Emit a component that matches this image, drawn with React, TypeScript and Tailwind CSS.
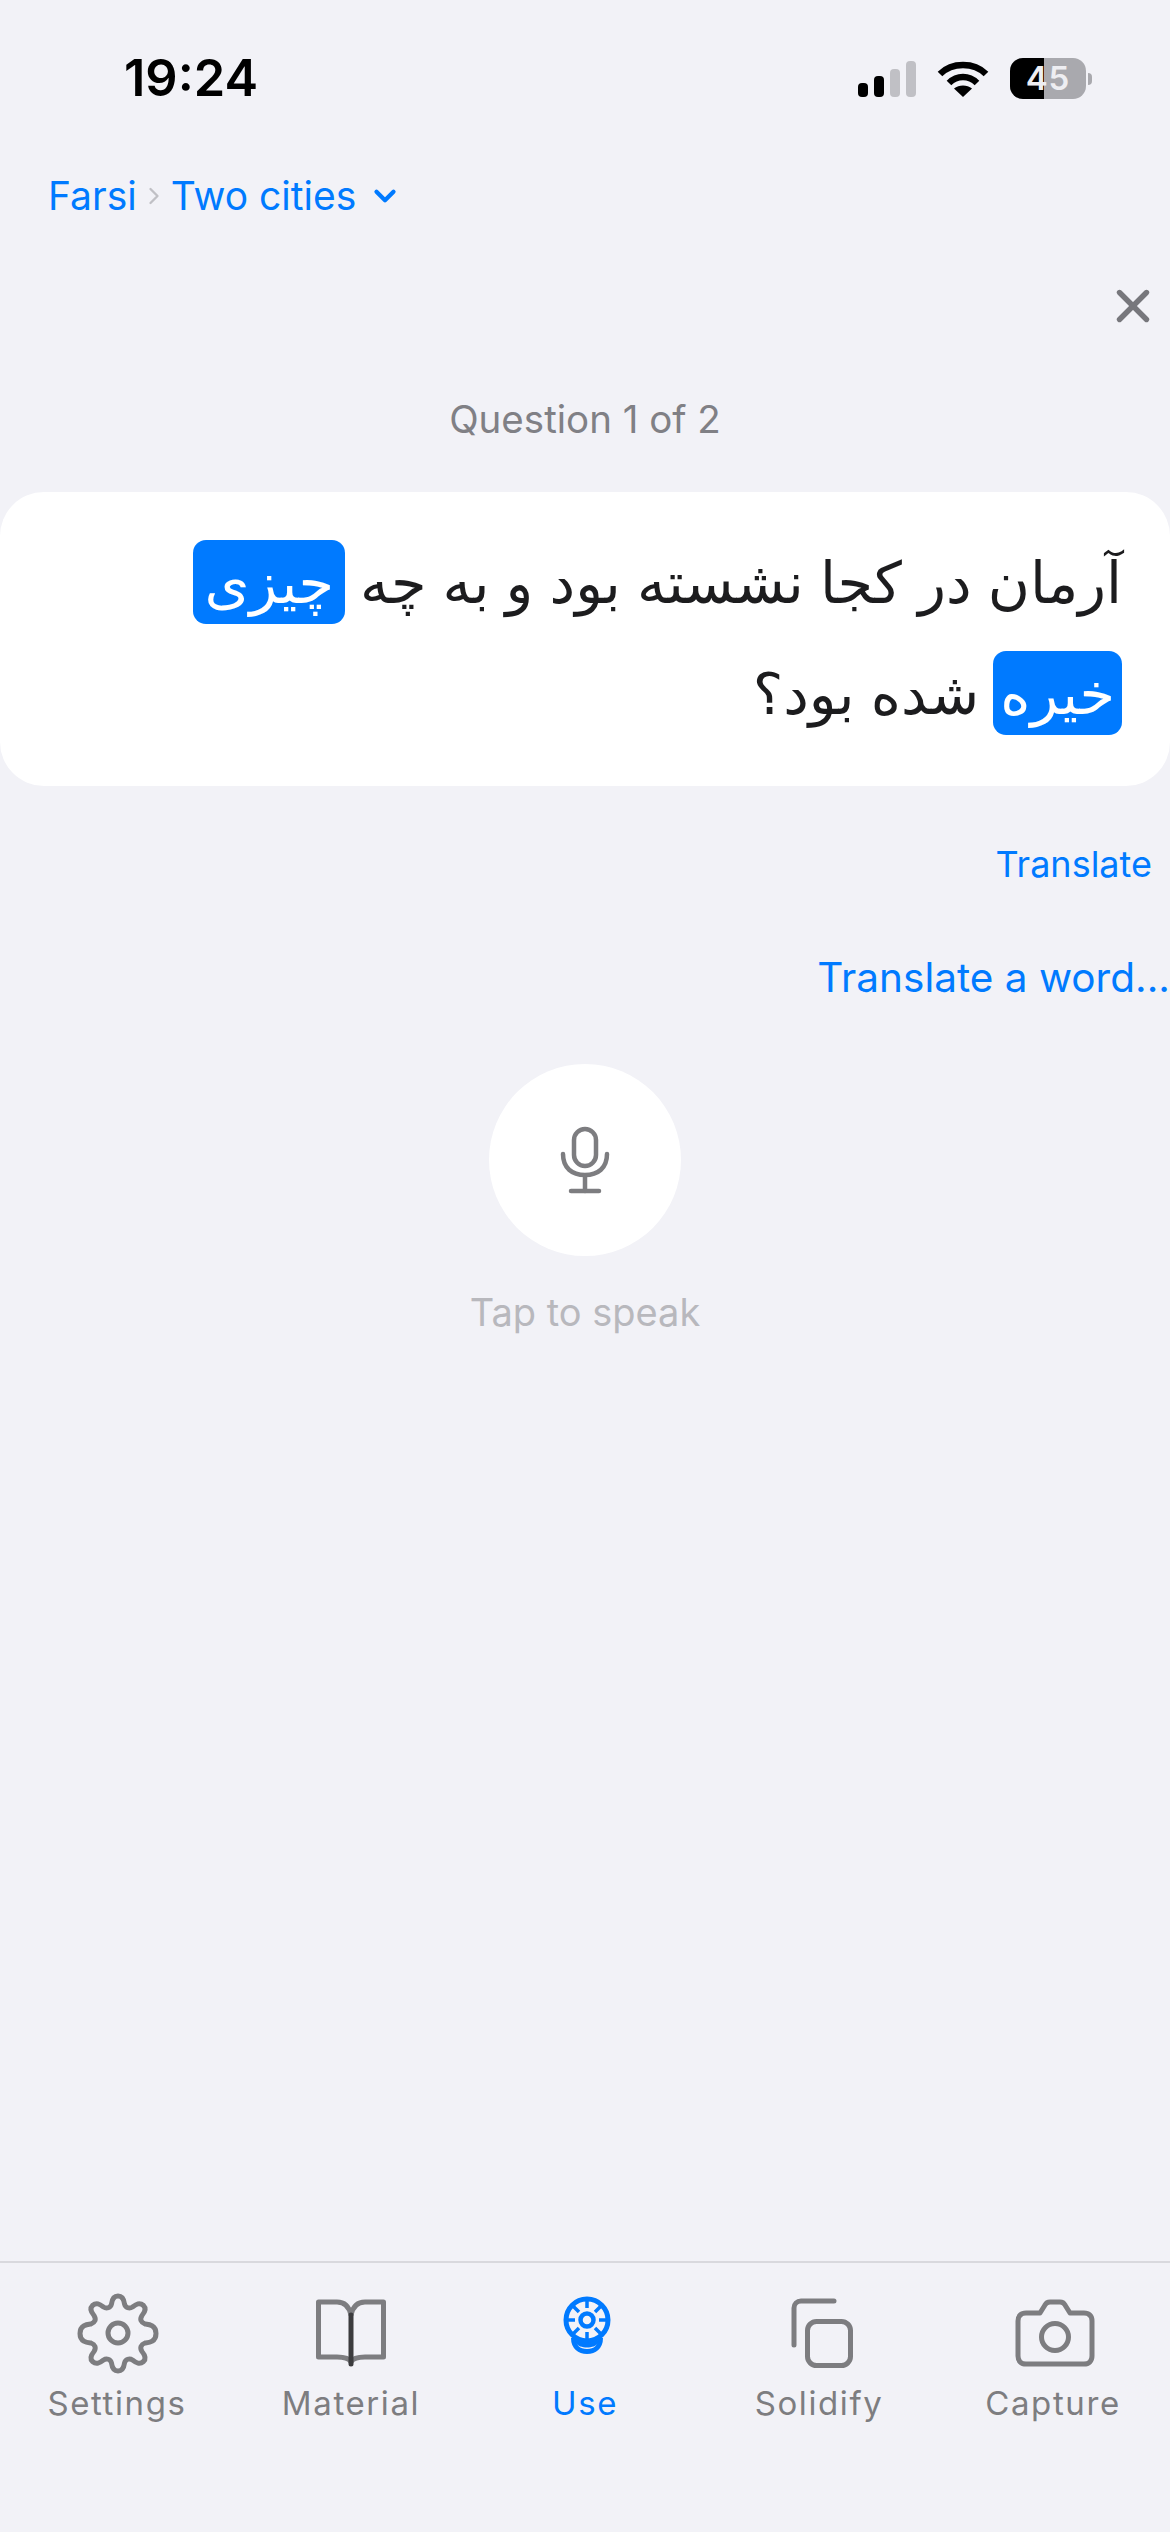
import { X, ChevronDown, ChevronRight } from "lucide-react";

const BLUE = "text-[#007aff]";

function SignalIcon() {
  return (
    <svg width="60" height="38" viewBox="0 0 60 38">
      <rect x="2" y="23" width="10" height="14" rx="4" fill="#000" />
      <rect x="18" y="16" width="10" height="21" rx="4" fill="#000" />
      <rect x="34" y="9" width="10" height="28" rx="4" fill="#c0c0c5" />
      <rect x="50" y="1" width="10" height="36" rx="4" fill="#c0c0c5" />
    </svg>
  );
}

function WifiIcon() {
  return (
    <svg width="52" height="38" viewBox="0 0 52 38" fill="none" stroke="#000" strokeWidth="6.5">
      <path d="M3 14C15 2 37 2 49 14" />
      <path d="M12 23C20 15 32 15 40 23" />
      <path d="M26 37L17 28.5C22 24.5 30 24.5 35 28.5Z" fill="#000" stroke="none" />
    </svg>
  );
}

function BatteryIcon() {
  return (
    <div className="flex items-center">
      <div className="relative flex h-[41px] w-[76px] items-center justify-center overflow-hidden rounded-[13px] bg-[#a9a9ae]">
        <div className="absolute inset-y-0 left-0 w-[34px] bg-black" />
        <span className="relative text-[33px] font-semibold leading-none tracking-[1px] text-[#eeeef2]">45</span>
      </div>
      <div className="ml-[2px] h-[12px] w-[4px] rounded-r-full bg-[#a9a9ae]" />
    </div>
  );
}

function MicIcon() {
  return (
    <svg width="50" height="68" viewBox="0 0 50 68" fill="none" stroke="#7d7d80" strokeWidth="4.500" strokeLinecap="round">
      <rect x="14" y="3" width="22" height="37" rx="11" />
      <path d="M3 28c0 14 9 21 22 21s22-7 22-21" />
      <path d="M25 51v14" />
      <path d="M11 65h28" />
    </svg>
  );
}

function GearIcon() {
  return (
    <svg width="82" height="82" viewBox="0 0 82 82" fill="none" stroke="#7d7d80" strokeWidth="5" className="ml-[2px]">
      <path d="M41 4c5 0 6 4 6.500 8 1 4 5 5 8 3 4-3 7-5 11-1.500 3 3 1 7-1.500 10-2.500 4-1 7 3 8.500 4 .5 11 1 11 9.500s-7 9-11 9.500c-4 1.500-5.500 4.500-3 8.500 2.500 3 4.500 7 1.500 10-4 3.500-7 1.500-11-1.500-3-2-7-1-8 3-.5 4-1.500 8-6.500 8s-6-4-6.500-8c-1-4-5-5-8-3-4 3-7 5-11 1.500-3-3-1-7 1.500-10 2.500-4 1-7-3-8.500-4-.5-11-1-11-9.500s7-9 11-9.500c4-1.500 5.500-4.500 3-8.500-2.500-3-4.500-7-1.500-10 4-3.500 7-1.500 11 1.500 3 2 7 1 8-3 .5-4 1.500-8 6.500-8z" />
      <circle cx="41" cy="41" r="10" />
    </svg>
  );
}

function BookIcon() {
  return (
    <svg width="72" height="70" viewBox="0 0 72 70" fill="none" strokeWidth="5">
      <path d="M36 17C34 8 29 4 22 4H3.500v55H22c7 0 12 1 14 5 2-4 7-5 14-5h18.500V4H50c-7 0-12 4-14 13z" stroke="#7d7d80" strokeLinejoin="round" />
      <path d="M36 17V66" stroke="#3c3c3e" strokeLinecap="round" />
    </svg>
  );
}

function BulbIcon() {
  return (
    <svg width="48" height="58" viewBox="0 0 48 58" fill="none" stroke="#007aff" strokeWidth="5" className="ml-[4px] -mt-[16px]">
      <circle cx="24" cy="24" r="21" />
      <circle cx="24" cy="24" r="6.500" strokeWidth="4.500" />
      <path d="M24 4v8M24 36v8M4 24h8M36 24h8M10 10l6 6M32 32l6 6M38 10l-6 6M16 32l-6 6" strokeWidth="3.500" />
      <path d="M10.500 42c0 9 6 13.500 13.500 13.500S37.500 51 37.500 42" />
      <path d="M13 44c7 3 15 3 22 0v3c-3 6-19 6-22 0z" fill="#007aff" stroke="none" />
    </svg>
  );
}

function CardsIcon() {
  return (
    <svg width="62" height="70" viewBox="0 0 62 70" fill="none" stroke="#7d7d80" strokeWidth="5" strokeLinecap="round" className="ml-[6px]">
      <path d="M43 3H10C6 3 3 6 3 10V47" />
      <rect x="16.500" y="23.500" width="43" height="44" rx="9" />
    </svg>
  );
}

function CameraIcon() {
  return (
    <svg width="80" height="68" viewBox="0 0 80 68" fill="none" stroke="#7d7d80" strokeWidth="5" className="ml-[3px]">
      <path d="M11 14h14l5-8c1-2 3-3 5-3h10c2 0 4 1 5 3l5 8h14c5 0 8 3 8 8v35c0 5-3 8-8 8H11c-5 0-8-3-8-8V22c0-5 3-8 8-8z" strokeLinejoin="round" />
      <circle cx="40" cy="38" r="13.500" />
    </svg>
  );
}

const tabs = [
  { label: "Settings", icon: <GearIcon />, active: false },
  { label: "Material", icon: <BookIcon />, active: false },
  { label: "Use", icon: <BulbIcon />, active: true },
  { label: "Solidify", icon: <CardsIcon />, active: false },
  { label: "Capture", icon: <CameraIcon />, active: false },
];

export default function App() {
  return (
    <div className="flex h-[2532px] w-[1170px] flex-col overflow-hidden bg-[#f2f2f7] font-['Inter','DejaVu_Sans',sans-serif]">
      {/* status bar */}
      <div className="flex h-[157px] shrink-0 items-start justify-between pt-[50px] pl-[124px] pr-[78px]">
        <span className="text-[50.500px] font-semibold leading-[56px] text-black">19:24</span>
        <div className="flex items-center gap-[21px] pt-[8px]">
          <SignalIcon />
          <WifiIcon />
          <BatteryIcon />
        </div>
      </div>

      {/* breadcrumb */}
      <div className={`flex h-[78px] shrink-0 items-center pl-[48px] text-[39px] ${BLUE}`}>
        <span>Farsi</span>
        <ChevronRight size={28} strokeWidth={2} className="mx-[3px] text-[#c0c0c5]" />
        <span>Two cities</span>
        <ChevronDown size={34} strokeWidth={3} className="ml-[12px]" />
      </div>

      <div className="mt-[36px] flex h-[70px] shrink-0 items-center justify-end pr-[10px]">
        <X size={54} strokeWidth={2.4} className="text-[#77777c]" />
      </div>

      <div className="mt-[55px] shrink-0 text-center text-[38.500px] leading-[46px] text-[#808085]">Question 1 of 2</div>

      {/* question card */}
      <div
        dir="rtl"
        className="mt-[50px] h-[294px] shrink-0 rounded-[44px] bg-white pt-[48px] pr-[48px] pl-[20px] text-[57.500px] text-[#1c1c1e]"
      >
        <div className="flex h-[84px] items-center">
          <span>آرمان در کجا نشسته بود و به چه</span>
          <span className="mr-[15px] flex h-[84px] items-center rounded-[13px] bg-[#007aff] px-[11px] text-white">چیزی</span>
        </div>
        <div className="mt-[27px] flex h-[84px] items-center">
          <span className="flex h-[84px] items-center rounded-[13px] bg-[#007aff] px-[7px] text-white">خیره</span>
          <span className="mr-[14px]">شده بود؟</span>
        </div>
      </div>

      <div className={`mt-[54px] shrink-0 pr-[18px] text-right text-[36px] leading-[48px] ${BLUE}`}>Translate</div>
      <div className={`mt-[66px] shrink-0 text-right text-[40.500px] leading-[48px] ${BLUE}`}>Translate a word...</div>

      {/* mic */}
      <div className="mt-[62px] flex shrink-0 flex-col items-center">
        <div className="flex h-[192px] w-[192px] items-center justify-center rounded-full bg-white">
          <MicIcon />
        </div>
        <div className="mt-[32px] text-[38px] leading-[48px] text-[#b8b8bd]">Tap to speak</div>
      </div>

      <div className="flex-1" />

      {/* tab bar */}
      <div className="grid h-[271px] shrink-0 grid-cols-5 border-t-2 border-[#d9d9de] pt-[29px]">
        {tabs.map((tab) => (
          <div key={tab.label} className="flex flex-col items-center">
            <div className="flex h-[82px] items-center justify-center">{tab.icon}</div>
            <span
              className={`mt-[8px] text-[33px] leading-[42px] tracking-[1.6px] ${
                tab.active ? "text-[#007aff]" : "text-[#7d7d80]"
              }`}
            >
              {tab.label}
            </span>
          </div>
        ))}
      </div>
    </div>
  );
}
